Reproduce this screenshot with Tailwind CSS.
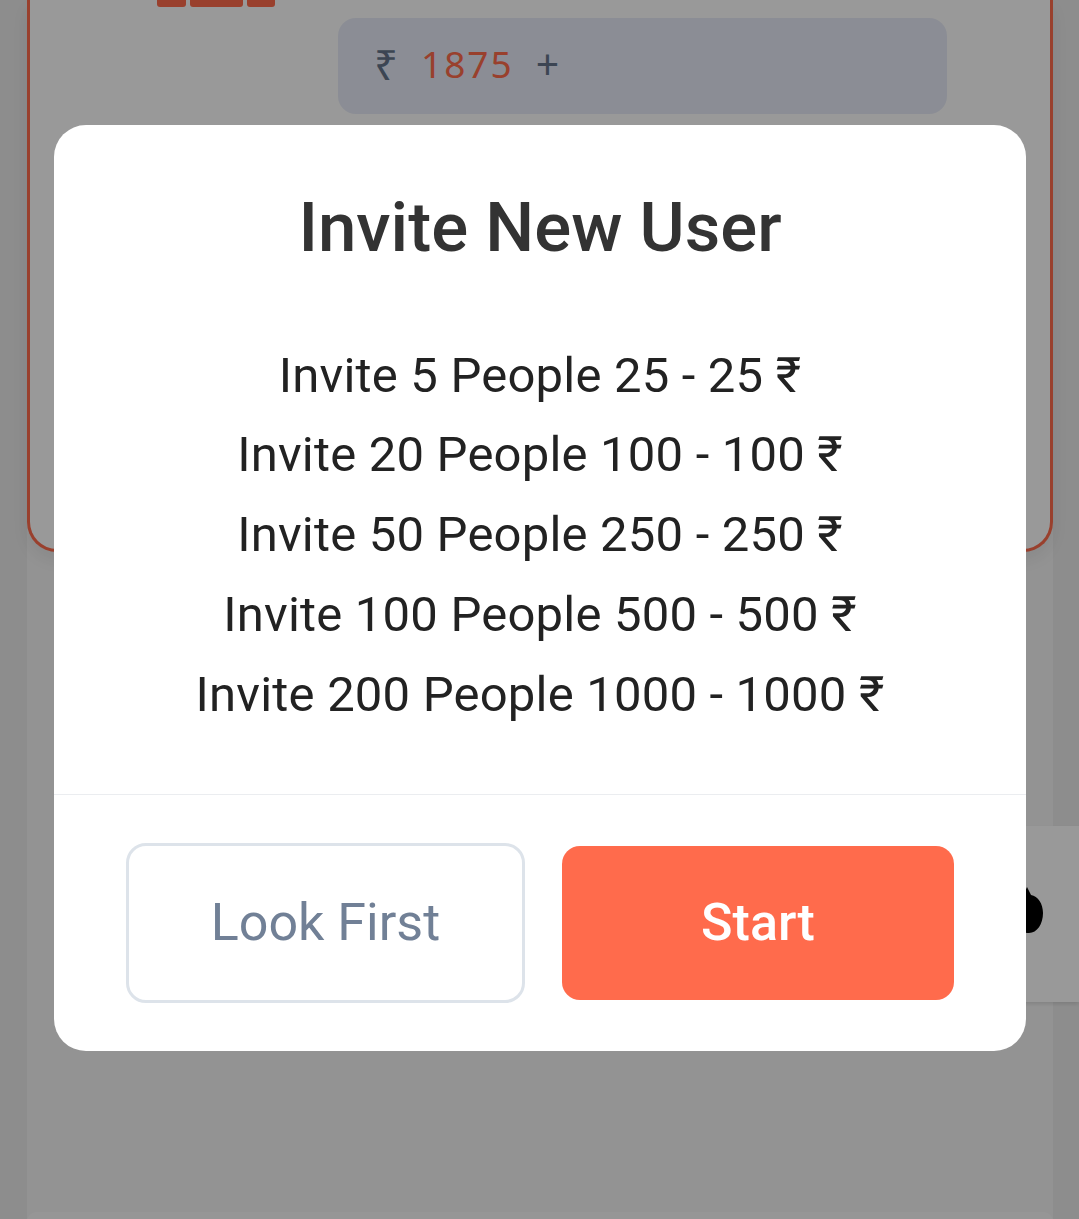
<!DOCTYPE html>
<html lang="en">

<head>
    <meta charset="UTF-8">
    <meta name="viewport" content="width=device-width, initial-scale=1.0">
    <title>Invite New User</title>
    <script src="https://cdn.jsdelivr.net/npm/@tailwindcss/browser@4"></script>
</head>

<body class="font-['Roboto',sans-serif]">

    <div class="relative h-[1219px] overflow-hidden bg-[#ececec]">

        <!-- page behind the dialog -->
        <div class="ml-[27px] mr-[26px] h-[1219px] bg-[#f6f6f6]">
            <div class="h-[552px] rounded-b-[30px] border-[3px] border-t-0 border-[#ff6b4c] bg-white shadow-[0_8px_20px_rgba(0,0,0,0.08)]">
                <div class="ml-[127px] flex gap-1">
                    <div class="h-[7px] w-[29px] rounded-b-[3px] bg-[#ff6b4c]"></div>
                    <div class="h-[7px] w-[53px] rounded-b-[3px] bg-[#ff6b4c]"></div>
                    <div class="h-[7px] w-[28px] rounded-b-[3px] bg-[#ff6b4c]"></div>
                </div>
                <div class="ml-[308px] mt-[11px] flex h-[96px] w-[609px] items-center rounded-[18px] bg-[#e8ecf8] pl-[36px] font-['Noto_Sans',sans-serif] text-[37px] tracking-[2px] text-[#64748b]">
                    <span class="-mt-[4px] text-[42px] leading-none">₹</span>
                    <span class="-mt-[4px] ml-[21px] text-[#ff6b4c]">1875</span>
                    <span class="-mt-[4px] ml-[22px] text-[41px] leading-none">+</span>
                </div>
            </div>
            <div class="mt-[660px] h-[20px] rounded-t-[10px] bg-[#fbfbfb]"></div>
        </div>

        <!-- box sticking out on the right -->
        <div class="absolute right-0 top-[826px] h-[176px] w-[100px] rounded-l-[12px] bg-white shadow-[0_2px_4px_rgba(0,0,0,0.12)]">
            <svg class="absolute left-[26px] top-[58px]" width="50" height="52" viewBox="0 0 50 52">
                <path fill="#000" d="M22 3 L26 11 C33 12 38 20 38 29 C38 40 32 49 24 49 C16 49 6 45 6 30 C6 20 18 14 22 3 Z"/>
            </svg>
        </div>

        <!-- overlay -->
        <div class="absolute inset-0 bg-black/40"></div>

        <!-- dialog -->
        <div class="absolute left-[54px] top-[125px] h-[926px] w-[972px] rounded-[32px] bg-white">
            <h2 class="pt-[63px] text-center text-[69px] leading-[80px] font-medium text-[#333333]">Invite New User</h2>
            <div class="mt-[67.5px] h-[459.5px] border-b border-[#ebedf0] text-center text-[49px] leading-[79.8px] tracking-[0.2px] text-[#222222]">
                <p>Invite 5 People 25 - 25 ₹</p>
                <p>Invite 20 People 100 - 100 ₹</p>
                <p>Invite 50 People 250 - 250 ₹</p>
                <p>Invite 100 People 500 - 500 ₹</p>
                <p>Invite 200 People 1000 - 1000 ₹</p>
            </div>
            <div class="mt-[48px] flex items-center pl-[72px]">
                <button class="h-[160px] w-[399px] rounded-[20px] border-[3px] border-[#dde3ea] text-[52px] text-[#718096]">Look First</button>
                <button class="ml-[37px] h-[154px] w-[392px] rounded-[18px] bg-[#ff6b4c] text-[52px] font-medium text-white">Start</button>
            </div>
        </div>

    </div>

</body>

</html>
